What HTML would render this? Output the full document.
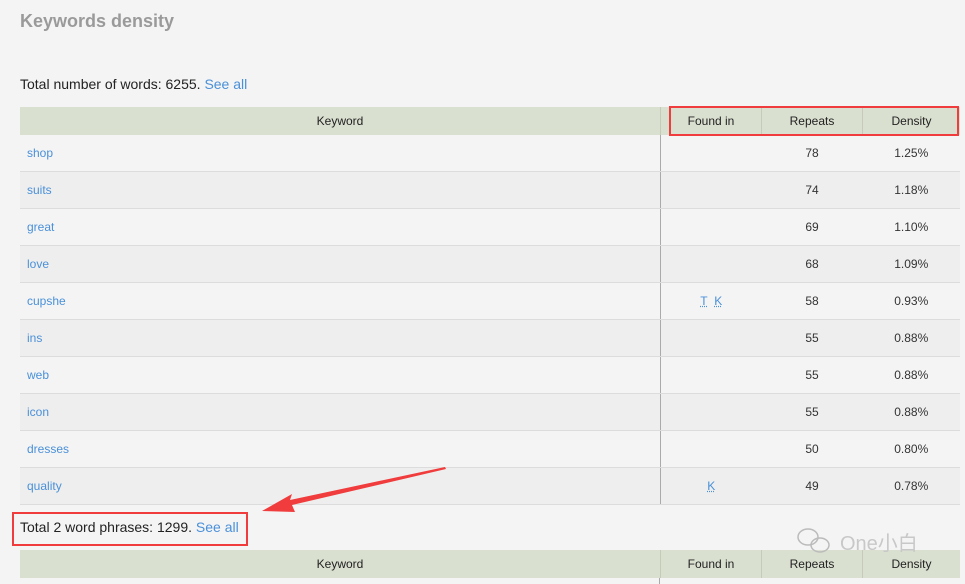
<!DOCTYPE html>
<html><head><style>
body{margin:0;width:965px;height:584px;background:#f4f4f4;font-family:"Liberation Sans","Noto Sans CJK SC",sans-serif;position:relative;overflow:hidden}
.a{position:absolute}
h1{position:absolute;left:20px;top:11px;margin:0;font-size:18px;color:#9a9a9a;font-weight:bold}
.tot{position:absolute;left:20px;font-size:14px;color:#222}
.tot span{color:#4a90d9}
table{position:absolute;left:20px;width:940px;border-collapse:collapse;font-size:12px;color:#333;table-layout:fixed}
th,td{padding:0}
th{background:#dae0d0;font-weight:normal;height:28px;color:#222;border-left:1px solid #c5cbb8}
th:first-child{border-left:none}
td{height:36px;border-bottom:1px solid #dcdcdc;text-align:center}
td:first-child{text-align:left;padding-left:7px;color:#4a90d9}
td:nth-child(2){border-left:1px solid #aaa}
tr:nth-child(odd) td{background:#eee}
.l{color:#4a90d9;text-decoration:underline dotted}
</style></head><body>
<h1>Keywords density</h1>
<div class="tot" style="top:76px">Total number of words: 6255. <span>See all</span></div>
<table style="top:107px">
<tr><th style="width:640px">Keyword</th><th style="width:100px">Found in</th><th style="width:100px">Repeats</th><th>Density</th></tr>
<tr><td>shop</td><td></td><td>78</td><td>1.25%</td></tr>
<tr><td>suits</td><td></td><td>74</td><td>1.18%</td></tr>
<tr><td>great</td><td></td><td>69</td><td>1.10%</td></tr>
<tr><td>love</td><td></td><td>68</td><td>1.09%</td></tr>
<tr><td>cupshe</td><td><span class="l">T</span>&nbsp; <span class="l">K</span></td><td>58</td><td>0.93%</td></tr>
<tr><td>ins</td><td></td><td>55</td><td>0.88%</td></tr>
<tr><td>web</td><td></td><td>55</td><td>0.88%</td></tr>
<tr><td>icon</td><td></td><td>55</td><td>0.88%</td></tr>
<tr><td>dresses</td><td></td><td>50</td><td>0.80%</td></tr>
<tr><td>quality</td><td><span class="l">K</span></td><td>49</td><td>0.78%</td></tr>
</table>
<div class="tot" style="top:519px">Total 2 word phrases: 1299. <span>See all</span></div>
<table style="top:550px">
<tr><th style="width:640px">Keyword</th><th style="width:100px">Found in</th><th style="width:100px">Repeats</th><th>Density</th></tr>
</table>
<div class="a" style="left:659px;top:578px;width:1px;height:6px;background:#aaa"></div>
<div class="a" style="left:669px;top:106px;width:286px;height:26px;border:2px solid #f03c3c"></div>
<div class="a" style="left:12px;top:512px;width:232px;height:30px;border:2px solid #f03c3c"></div>
<svg class="a" style="left:0;top:0" width="965" height="584">
<polygon points="445,467 290,500 292,494 262,511 295,512 292,505 446,469" fill="#f03c3c"/>
<g fill="none" stroke="#bbb" stroke-width="1.5"><ellipse cx="808" cy="537" rx="10" ry="8"/><ellipse cx="820" cy="545" rx="9" ry="7"/></g>
<text x="840" y="550" font-size="20" fill="#c8c8c8" font-family="Liberation Sans,Noto Sans CJK SC,sans-serif">One小白</text>
</svg>
</body></html>
